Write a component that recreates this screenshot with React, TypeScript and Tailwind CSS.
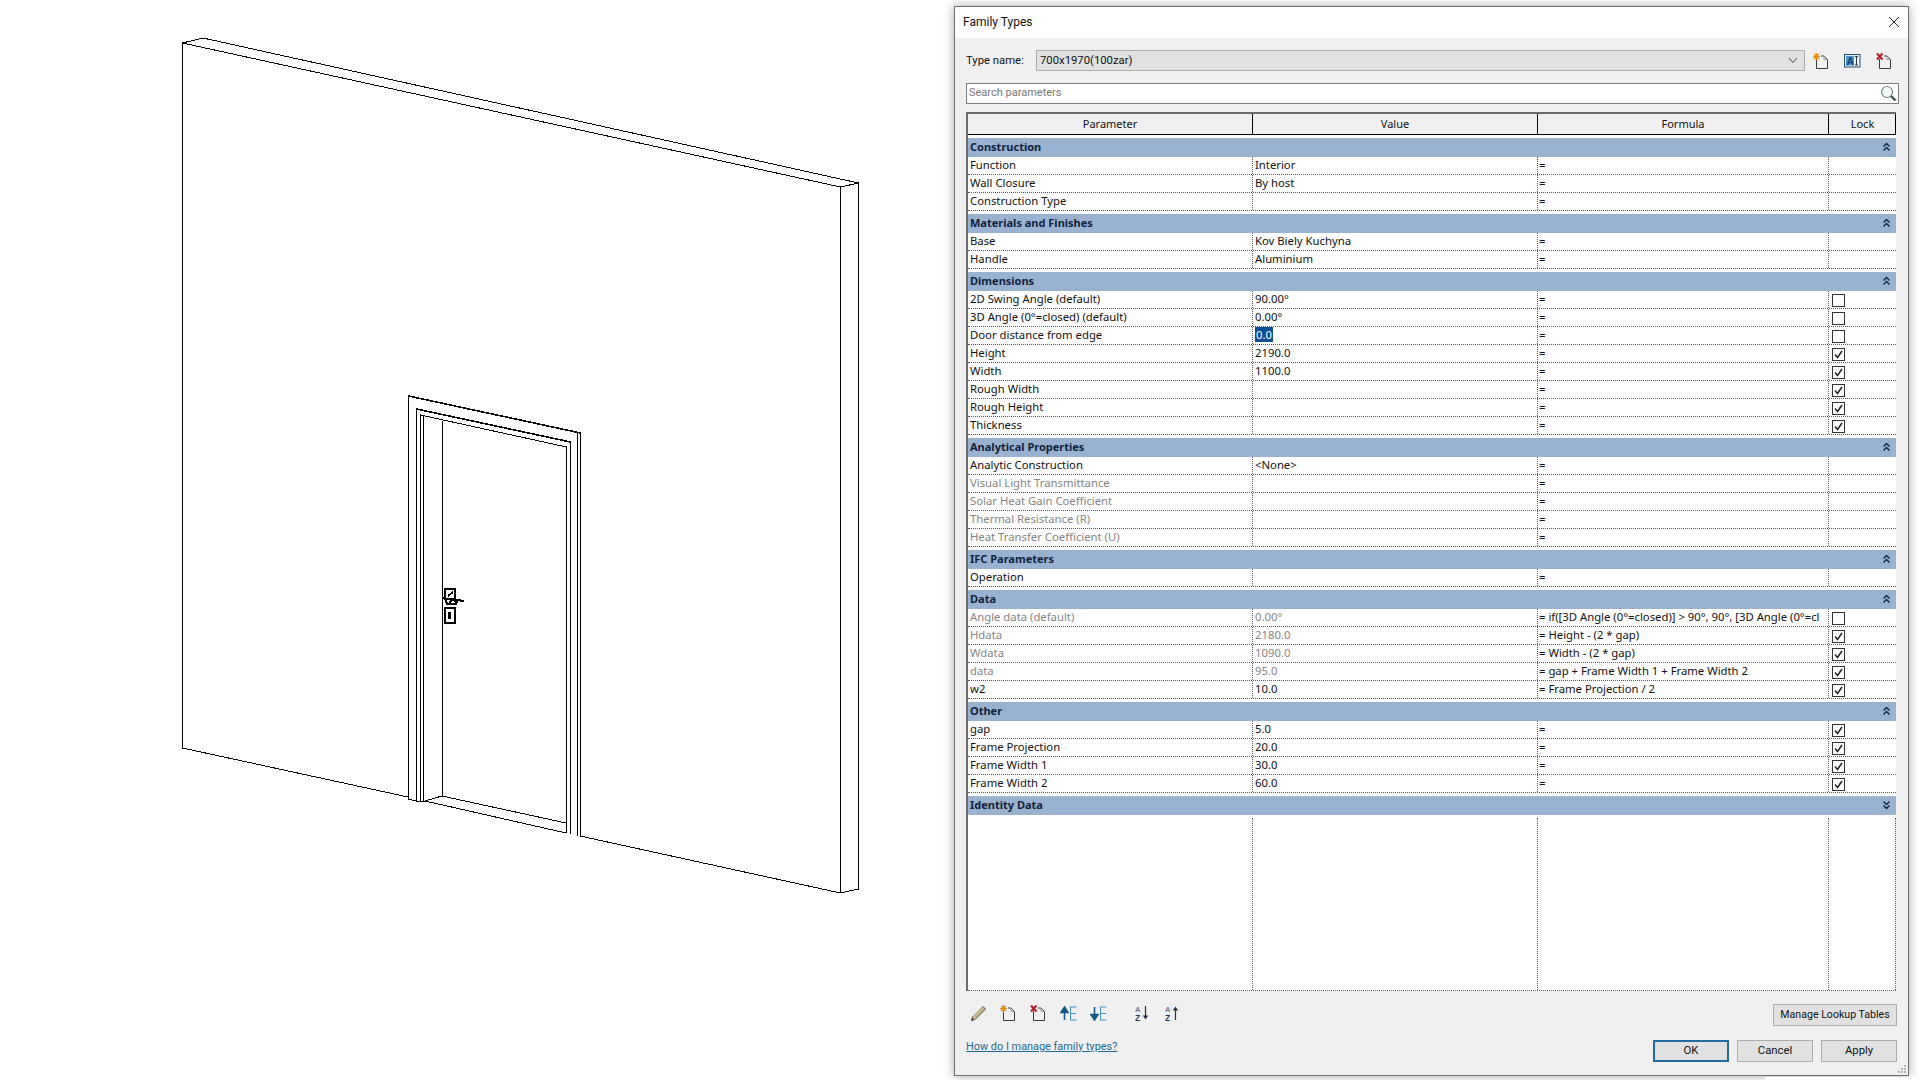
import React from 'react'

type Row = { name: string; value?: string; formula?: string; lock?: boolean; muted?: boolean; selected?: boolean }
type Group = { title: string; collapsed?: boolean; rows: Row[] }

const groups: Group[] = [
  { title: 'Construction', rows: [
    { name: 'Function', value: 'Interior' },
    { name: 'Wall Closure', value: 'By host' },
    { name: 'Construction Type' },
  ] },
  { title: 'Materials and Finishes', rows: [
    { name: 'Base', value: 'Kov Biely Kuchyna' },
    { name: 'Handle', value: 'Aluminium' },
  ] },
  { title: 'Dimensions', rows: [
    { name: '2D Swing Angle (default)', value: '90.00°', lock: false },
    { name: '3D Angle (0°=closed) (default)', value: '0.00°', lock: false },
    { name: 'Door distance from edge', value: '0.0', lock: false, selected: true },
    { name: 'Height', value: '2190.0', lock: true },
    { name: 'Width', value: '1100.0', lock: true },
    { name: 'Rough Width', lock: true },
    { name: 'Rough Height', lock: true },
    { name: 'Thickness', lock: true },
  ] },
  { title: 'Analytical Properties', rows: [
    { name: 'Analytic Construction', value: '<None>' },
    { name: 'Visual Light Transmittance', muted: true },
    { name: 'Solar Heat Gain Coefficient', muted: true },
    { name: 'Thermal Resistance (R)', muted: true },
    { name: 'Heat Transfer Coefficient (U)', muted: true },
  ] },
  { title: 'IFC Parameters', rows: [{ name: 'Operation' }] },
  { title: 'Data', rows: [
    { name: 'Angle data (default)', value: '0.00°', formula: 'if([3D Angle (0°=closed)] > 90°, 90°, [3D Angle (0°=cl', lock: false, muted: true },
    { name: 'Hdata', value: '2180.0', formula: 'Height - (2 * gap)', lock: true, muted: true },
    { name: 'Wdata', value: '1090.0', formula: 'Width - (2 * gap)', lock: true, muted: true },
    { name: 'data', value: '95.0', formula: 'gap + Frame Width 1 + Frame Width 2', lock: true, muted: true },
    { name: 'w2', value: '10.0', formula: 'Frame Projection / 2', lock: true },
  ] },
  { title: 'Other', rows: [
    { name: 'gap', value: '5.0', lock: true },
    { name: 'Frame Projection', value: '20.0', lock: true },
    { name: 'Frame Width 1', value: '30.0', lock: true },
    { name: 'Frame Width 2', value: '60.0', lock: true },
  ] },
  { title: 'Identity Data', collapsed: true, rows: [] },
]

function DoubleChevron({ down }: { down?: boolean }) {
  return (
    <svg width="9" height="10" viewBox="0 0 9 10" fill="none" stroke="#10233c" strokeWidth="1.4" className={down ? 'rotate-180' : ''}>
      <path d="M1.5 4.5 4.5 1.5 7.5 4.5M1.5 8.5 4.5 5.5 7.5 8.5" />
    </svg>
  )
}

function Checkbox({ checked }: { checked: boolean }) {
  return (
    <div className="w-[13px] h-[13px] border border-[#333] bg-white flex items-center justify-center mt-[2px]">
      {checked && (
        <svg width="11" height="11" viewBox="0 0 11 11" fill="none" stroke="#222" strokeWidth="1.5">
          <path d="M2 5.5 4.5 8.5 9 2" />
        </svg>
      )}
    </div>
  )
}

function ParamRow({ row }: { row: Row }) {
  const tone = row.muted ? 'text-[#858585]' : 'text-[#111]'
  return (
    <div className="grid grid-cols-[284px_285px_291px_68px] h-[18px] border-b border-dotted border-[#5a5a5a] leading-[16px]">
      <div className={`pl-[2px] whitespace-nowrap ${tone}`}>{row.name}</div>
      <div className={`pl-[2px] border-l border-dotted border-[#5a5a5a] whitespace-nowrap ${tone}`}>
        {row.selected ? <span className="bg-[#0b4f97] text-white inline-block leading-[15px] px-[1px]">{row.value}</span> : row.value}
      </div>
      <div className="pl-[1px] border-l border-dotted border-[#5a5a5a] whitespace-nowrap overflow-hidden text-[#111]">
        = {row.formula}
      </div>
      <div className="pl-[3px] border-l border-dotted border-[#5a5a5a] flex items-center">
        {row.lock !== undefined && <Checkbox checked={row.lock} />}
      </div>
    </div>
  )
}

function NewPage({ mark }: { mark: 'new' | 'delete' }) {
  return (
    <svg width="16" height="16" viewBox="0 0 16 16" fill="none">
      <path d="M3.5 6V15.5H14.5V6.5L11 3H8" stroke="#3c3c3c" />
      <path d="M11 3V6.5H14.5" stroke="#9a9a9a" />
      {mark === 'new' ? (
        <>
          <circle cx="3.5" cy="3.5" r="2" fill="#e88a0c" />
          <path d="M3.5 0V7M0 3.5H7M1 1 6 6M6 1 1 6" stroke="#e88a0c" strokeWidth="1.2" />
        </>
      ) : (
        <path d="M1 .5 6.5 6.5M6.5 .5 1 6.5" stroke="#b3202a" strokeWidth="2.2" />
      )}
    </svg>
  )
}

function RenameIcon() {
  return (
    <svg width="17" height="14" viewBox="0 0 17 14" fontFamily="'Liberation Sans', sans-serif">
      <rect x=".5" y=".5" width="15.5" height="12.5" fill="#e6eef6" stroke="#24506e" />
      <rect x="2" y="2" width="8" height="9.5" fill="#4f97cf" />
      <text x="2.6" y="10.8" fontSize="10.5" fontWeight="700" fill="#12406a">A</text>
      <path d="M11 2.5H14M12.5 2.5V11M11 11H14" stroke="#33393f" fill="none" />
    </svg>
  )
}

function MoveIcon({ down }: { down?: boolean }) {
  return (
    <svg width="17" height="15" viewBox="0 0 17 15" fill="none">
      <path d={down ? 'M4.5 1V9M1 8.5H8L4.5 14Z' : 'M4.5 14V6M1 6.5H8L4.5 1Z'} fill="#155a86" stroke="#155a86" strokeWidth="1.6" />
      <path d="M10 1H16.5M10.5 1V14M10 7.5H16M10 14H16.5" stroke="#3f94c4" />
    </svg>
  )
}

function SortIcon({ up }: { up?: boolean }) {
  return (
    <svg width="14" height="16" viewBox="0 0 14 16" fontFamily="'Liberation Sans', sans-serif" fontWeight="700">
      <text x="0" y="7" fontSize="7.5" fill="#707f95">A</text>
      <text x="0" y="15.5" fontSize="8.5" fill="#2c3a55">Z</text>
      <path d={up ? 'M10.5 15V4' : 'M10.5 1V12'} stroke="#27324a" strokeWidth="1.2" />
      <path d={up ? 'M7.8 5.5H13.2L10.5 1.5Z' : 'M7.8 10.5H13.2L10.5 14.5Z'} fill="#27324a" />
    </svg>
  )
}

function Pencil() {
  return (
    <svg width="17" height="17" viewBox="0 0 17 17" fill="none">
      <path d="M13 1.5 15.5 4 5 14.5 1.5 15.5 2.5 12Z" fill="#c9b68a" stroke="#55524a" />
      <path d="M3 11.5 12 2.5" stroke="#f0e6c8" />
      <path d="M1.5 15.5 2.2 13 4 14.8Z" fill="#333" />
    </svg>
  )
}

function Drawing() {
  return (
    <svg width="954" height="1080" viewBox="0 0 954 1080" fill="none" stroke="#000" strokeWidth="1" shapeRendering="crispEdges" className="shrink-0">
      {/* wall */}
      <path d="M182.5 748V43L203 38 858.5 183V889L840.5 893V187L182.5 43" />
      <path d="M840.5 187 858.5 183" />
      <path d="M182.5 748 408 797M580 836 840.5 893" />
      {/* door frame */}
      <path d="M408.5 799V396L580.5 433V836" />
      <path d="M408.5 396 580.5 433" strokeWidth="1.6" />
      <path d="M577.5 433V836" />
      <path d="M416.5 801V409L570.5 442V834" />
      <path d="M416.5 409 570.5 442" strokeWidth="1.6" />
      <path d="M420.5 801V415L566.5 447V833" />
      <path d="M423.5 801V416" />
      <path d="M442.5 796V421" />
      <path d="M408 799 416 801H425L566 833M425 801 442 796 566 823" />
      {/* handle and lock */}
      <path d="M445 589H455V595L456 604H447L445 598Z" strokeWidth="2" />
      <path d="M442 598 450 599 464 601M448 596 453 592M449 603 455 598M450 599 458 602" strokeWidth="2" />
      <path d="M445 608H455V623H445Z" strokeWidth="2" />
      <rect x="448" y="612" width="3" height="7" fill="#000" stroke="none" />
    </svg>
  )
}

export default function App() {
  return (
    <div className="w-[1920px] h-[1080px] bg-white flex relative overflow-hidden font-['Noto_Sans','Open_Sans',sans-serif] text-[11.3px] text-[#111]">
      <Drawing />

      <div className="relative mt-[6px] w-[955px] h-[1070px] flex flex-col bg-[#f0f0f0] border border-[#6e6e6e] shadow-[0_0_10px_rgba(0,0,0,0.35)]">
        <div className="h-[31px] bg-white flex items-center justify-between pl-[8px] pr-[8px] pb-[1px] shrink-0">
          <span className="font-['Roboto',sans-serif] text-[12px]">Family Types</span>
          <svg width="12" height="12" viewBox="0 0 12 12" stroke="#222" strokeWidth="1"><path d="M1 1 11 11M11 1 1 11" /></svg>
        </div>

        <div className="flex-1 flex flex-col pl-[11px] pr-[11px] font-['Roboto',sans-serif] text-[11.3px]">
          <div className="flex items-center mt-[12px] h-[21px]">
            <span className="w-[70px] shrink-0 pt-[1px]">Type name:</span>
            <div className="w-[769px] h-[21px] bg-[#e1e1e1] border border-[#adadad] flex items-center justify-between pl-[3px] pr-[6px]">
              <span className="pt-[1px]">700x1970(100zar)</span>
              <svg width="10" height="7" viewBox="0 0 10 7" fill="none" stroke="#444"><path d="M1 1 5 5.5 9 1" /></svg>
            </div>
            <div className="flex items-center ml-[8px] gap-[15px]">
              <NewPage mark="new" />
              <RenameIcon />
              <NewPage mark="delete" />
            </div>
          </div>

          <div className="mt-[12px] w-[933px] h-[21px] bg-white border border-[#7d7d7d] flex items-center justify-between pl-[2px] pr-[1px]">
            <span className="text-[#777] pb-[1px] text-[11px]">Search parameters</span>
            <svg width="17" height="17" viewBox="0 0 17 17" fill="none">
              <circle cx="7" cy="7" r="5.5" fill="#f2f7f7" stroke="#7a8a8a" strokeWidth="1.2" />
              <path d="M11 11 15.5 15.5" stroke="#45504f" strokeWidth="2.4" />
            </svg>
          </div>

          <div className="mt-[8px] w-[930px] h-[879px] flex flex-col bg-white border-l-2 border-t-2 border-[#6b6b6b] font-['Noto_Sans',sans-serif]">
            <div className="grid grid-cols-[284px_285px_291px_68px] h-[21px] bg-[#f0f0f0] border-b border-black border-r shrink-0 text-center leading-[19px] text-[11px]">
              <div>Parameter</div>
              <div className="border-l border-black">Value</div>
              <div className="border-l border-black">Formula</div>
              <div className="border-l border-black">Lock</div>
            </div>

            {groups.map(g => (
              <div key={g.title} className="pt-[3px] shrink-0">
                <div className="h-[19px] bg-[#99b2cf] flex items-center justify-between pl-[2px] pr-[5px] pb-[1px] font-bold text-[#10233c] text-[11px]">
                  <span>{g.title}</span>
                  <DoubleChevron down={g.collapsed} />
                </div>
                {g.rows.map(r => <ParamRow key={r.name} row={r} />)}
              </div>
            ))}

            <div className="grid grid-cols-[284px_285px_291px_68px] flex-1 mt-[3px] border-b border-dotted border-[#5a5a5a]">
              <div />
              <div className="border-l border-dotted border-[#5a5a5a]" />
              <div className="border-l border-dotted border-[#5a5a5a]" />
              <div className="border-x border-dotted border-[#5a5a5a]" />
            </div>
          </div>

          <div className="mt-[13px] h-[22px] w-[931px] flex items-center justify-between">
            <div className="flex items-center pl-[4px] pb-[4px]">
              <div className="w-[30px]"><Pencil /></div>
              <div className="w-[30px]"><NewPage mark="new" /></div>
              <div className="w-[30px]"><NewPage mark="delete" /></div>
              <div className="w-[30px]"><MoveIcon /></div>
              <div className="w-[45px]"><MoveIcon down /></div>
              <div className="w-[30px]"><SortIcon /></div>
              <div className="w-[30px]"><SortIcon up /></div>
            </div>
            <button className="w-[124px] h-[22px] bg-[#e1e1e1] border border-[#adadad] whitespace-nowrap text-[10.6px]">Manage Lookup Tables</button>
          </div>

          <div className="mt-[14px] h-[22px] w-[931px] flex items-center justify-between">
            <a className="text-[#1b6a94] underline pb-[8px] text-[10.9px]">How do I manage family types?</a>
            <div className="flex gap-[8px]">
              <button className="w-[76px] h-[22px] bg-[#e1e1e1] border-2 border-[#1f6ca0]">OK</button>
              <button className="w-[76px] h-[22px] bg-[#e1e1e1] border border-[#adadad]">Cancel</button>
              <button className="w-[76px] h-[22px] bg-[#e1e1e1] border border-[#adadad]">Apply</button>
            </div>
          </div>
        </div>

        {/* resize grip */}
        <svg width="10" height="10" viewBox="0 0 10 10" fill="#b5b5b5" className="absolute right-[1px] bottom-[1px]">
          <rect x="7" y="1" width="2" height="2" />
          <rect x="4" y="4" width="2" height="2" />
          <rect x="7" y="4" width="2" height="2" />
          <rect x="1" y="7" width="2" height="2" />
          <rect x="4" y="7" width="2" height="2" />
          <rect x="7" y="7" width="2" height="2" />
        </svg>
      </div>

      {/* window behind the dialog, showing at the bottom edge */}
      <div className="absolute left-[1765px] top-[1077px] w-[155px] h-[3px] bg-white" />
    </div>
  )
}
